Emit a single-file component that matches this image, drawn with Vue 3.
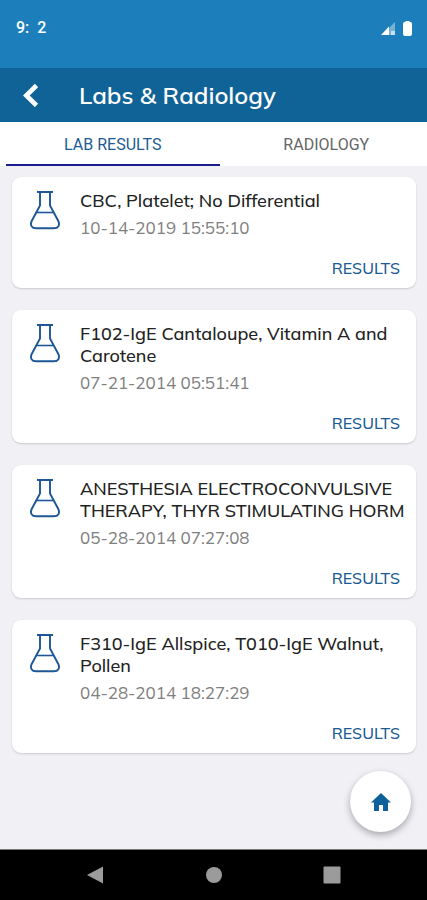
<script setup>
import { ref } from 'vue'

const tabs = ['LAB RESULTS', 'RADIOLOGY']
const activeTab = ref(0)

const labs = [
  { title: 'CBC, Platelet; No Differential', date: '10-14-2019 15:55:10' },
  { title: 'F102-IgE Cantaloupe, Vitamin A and Carotene', date: '07-21-2014 05:51:41' },
  { title: 'ANESTHESIA ELECTROCONVULSIVE THERAPY, THYR STIMULATING HORM', date: '05-28-2014 07:27:08' },
  { title: 'F310-IgE Allspice, T010-IgE Walnut, Pollen', date: '04-28-2014 18:27:29' },
]
</script>

<template>
  <div class="screen">
    <div class="status">
      <span class="clock">9:&nbsp; 2</span>
      <span class="indicators">
        <svg width="14" height="14" viewBox="0 0 14 14" aria-hidden="true">
          <path d="M14 1V14H1Z" fill="#fff" opacity="0.4" />
          <path d="M8 5.500V14H0Z" fill="#fff" />
          <path d="M10 10H14V14H10Z" fill="#fff" opacity="0.6" />
        </svg>
        <svg width="9" height="15" viewBox="0 0 9 15" aria-hidden="true">
          <path d="M2.500 0H6.500V1H7.500Q9 1.200 9 3V13Q9 15 7 15H2Q0 15 0 13V3Q0 1.200 1.500 1H2.500Z" fill="#fff" />
        </svg>
      </span>
    </div>

    <header class="header">
      <button class="back" type="button" aria-label="Back">
        <svg width="16" height="24" viewBox="0 0 16 24" aria-hidden="true">
          <path d="M13.500 2.500L3.300 12.500L13.500 22.500" fill="none" stroke="#fff" stroke-width="4.600" />
        </svg>
      </button>
      <h1>Labs &amp; Radiology</h1>
    </header>

    <div class="tabs" role="tablist">
      <button
        v-for="(tab, i) in tabs"
        :key="tab"
        type="button"
        role="tab"
        class="tab"
        :class="{ active: activeTab === i }"
        :aria-selected="activeTab === i"
        @click="activeTab = i"
      >{{ tab }}</button>
    </div>

    <main class="content">
      <article v-for="lab in labs" :key="lab.date" class="card">
        <svg class="flask" width="30" height="40" viewBox="0 0 30 40" fill="none" stroke="#1d5796" aria-hidden="true">
          <path d="M7 2H23" stroke-width="2" />
          <path d="M10 2V15.500L1.700 31C-0.200 35 1.800 38.300 6 38.300H24C28.200 38.300 30.200 35 28.300 31L20 15.500V2" stroke-width="1.900" />
          <path d="M6.500 22.500H23.500" stroke-width="1.600" />
        </svg>
        <div class="details">
          <h2>{{ lab.title }}</h2>
          <p>{{ lab.date }}</p>
          <a class="results" href="#results">RESULTS</a>
        </div>
      </article>

      <button class="home" type="button" aria-label="Home">
        <svg width="20" height="18" viewBox="0 0 20 18" aria-hidden="true">
          <path d="M10 0L20 9.500H17V18H12V12H8V18H3V9.500H0Z" fill="#0d609a" />
        </svg>
      </button>
    </main>

    <nav class="system-nav" aria-label="System">
      <button type="button" aria-label="Back">
        <svg width="18" height="18" viewBox="0 0 18 18"><path d="M16 0.500V17.500L0 9Z" fill="#9b9b9b" /></svg>
      </button>
      <button type="button" aria-label="Home">
        <svg width="18" height="18" viewBox="0 0 18 18"><circle cx="9" cy="9" r="8" fill="#9b9b9b" /></svg>
      </button>
      <button type="button" aria-label="Overview">
        <svg width="18" height="18" viewBox="0 0 18 18"><rect x="0.500" y="0.500" width="17" height="17" rx="1" fill="#9b9b9b" /></svg>
      </button>
    </nav>
  </div>
</template>

<style>
body {
  margin: 0;
}
</style>

<style scoped>
.screen {
  display: flex;
  flex-direction: column;
  min-height: 100vh;
  background: #f0f0f5;
  font-family: "Mulish", "Open Sans", sans-serif;
}

button {
  margin: 0;
  padding: 0;
  border: 0;
  background: none;
  font: inherit;
  cursor: pointer;
}

svg {
  display: block;
}

.status {
  display: flex;
  align-items: center;
  justify-content: space-between;
  box-sizing: border-box;
  height: 68px;
  padding: 0 15px 12px 16px;
  background: #1c7fbb;
  color: #fff;
}

.clock {
  font: 500 16px/20px Roboto, sans-serif;
}

.indicators {
  display: flex;
  align-items: center;
  gap: 8px;
}

.header {
  display: flex;
  align-items: center;
  gap: 40px;
  height: 54px;
  padding: 0 23px;
  background: #106397;
  color: #fff;
}

h1 {
  margin: 0;
  font-size: 24px;
  line-height: 32px;
  font-weight: 600;
}

.tabs {
  display: flex;
  height: 44px;
  padding-left: 6px;
  overflow: hidden;
  background: #fff;
}

.tab {
  flex: 0 0 50vw;
  border-bottom: 2px solid transparent;
  padding-top: 4px;
  color: #666;
  font: 400 16px/20px Roboto, sans-serif;
}

.tab.active {
  border-bottom-color: #1c1c8c;
  color: #1c5b94;
}

.content {
  position: relative;
  display: flex;
  flex: 1;
  flex-direction: column;
  gap: 22px;
  padding: 11px 11px 95px 12px;
}

.card {
  display: flex;
  align-items: flex-start;
  gap: 20px;
  padding: 13px 8px 9px 18px;
  border-radius: 9px;
  background: #fff;
  box-shadow: 0 1px 2px rgba(0, 0, 0, 0.16);
}

.flask {
  flex: none;
}

.details {
  display: flex;
  flex: 1;
  flex-direction: column;
  min-width: 0;
}

h2 {
  margin: 0;
  color: #222;
  font-size: 18px;
  line-height: 22px;
  font-weight: 500;
}

p {
  margin: 5px 0 18px;
  color: #808080;
  font-size: 17px;
  line-height: 22px;
  font-weight: 400;
}

.results {
  align-self: flex-end;
  margin-right: 8px;
  color: #1c5b94;
  font-size: 16px;
  line-height: 22px;
  font-weight: 500;
  text-decoration: none;
}

.home {
  position: absolute;
  right: 16px;
  bottom: 17px;
  display: grid;
  place-items: center;
  width: 61px;
  height: 61px;
  border-radius: 50%;
  background: #fff;
  box-shadow: 0 3px 7px rgba(0, 0, 0, 0.3);
}

.system-nav {
  display: flex;
  align-items: center;
  justify-content: center;
  gap: 100px;
  height: 50px;
  border-top: 1px solid #777;
  background: #000;
}
</style>
